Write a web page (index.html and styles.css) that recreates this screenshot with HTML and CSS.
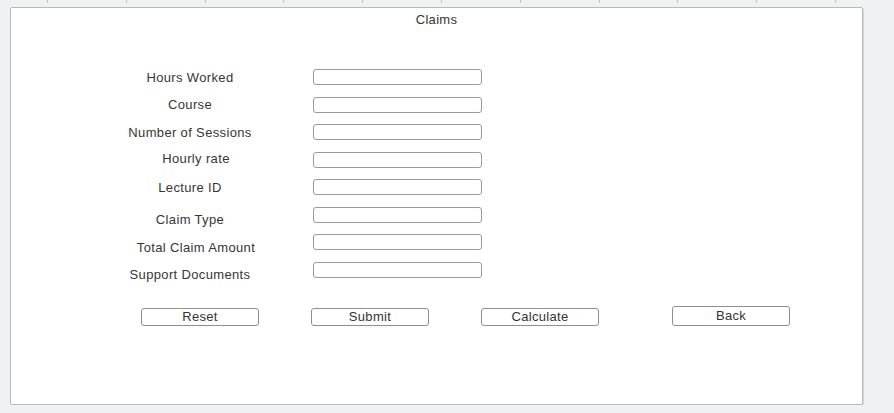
FILE: index.html
```html
<!DOCTYPE html>
<html lang="en">
<head>
<meta charset="utf-8">
<title>Claims</title>
<link rel="stylesheet" href="styles.css">
</head>
<body>
<div class="ruler"></div>
<main class="panel">
  <h1 class="title">Claims</h1>
  <form class="form">
    <label class="label">Hours Worked</label><input class="field" type="text">
    <label class="label">Course</label><input class="field" type="text">
    <label class="label">Number of Sessions</label><input class="field" type="text">
    <label class="label label-high label-right">Hourly rate</label><input class="field" type="text">
    <label class="label">Lecture ID</label><input class="field" type="text">
    <label class="label label-low">Claim Type</label><input class="field" type="text">
    <label class="label label-low label-right">Total Claim Amount</label><input class="field" type="text">
    <label class="label label-low">Support Documents</label><input class="field" type="text">
  </form>
  <div class="actions">
    <button class="btn" type="button">Reset</button>
    <button class="btn" type="button">Submit</button>
    <button class="btn" type="button">Calculate</button>
    <button class="btn btn-back" type="button">Back</button>
  </div>
</main>
</body>
</html>
```
FILE: styles.css
```css
html, body {
  margin: 0;
  padding: 0;
  background: #f0f1f3;
  font-family: "Liberation Sans", Arial, sans-serif;
  color: #383838;
}

.ruler {
  height: 3px;
  margin-bottom: 4px;
  background: repeating-linear-gradient(to right,
    transparent 0 47px,
    #bfc0c3 47px 48px,
    transparent 48px 78.8px);
}

.panel {
  box-sizing: border-box;
  margin-left: 10px;
  width: 853px;
  height: 398px;
  background: #ffffff;
  border: 1px solid #b9b9b9;
  border-radius: 2px;
  box-shadow: 1px 1px 0 #d6d6d6;
}

.title {
  margin: 4px 0 0;
  font-size: 13px;
  font-weight: normal;
  letter-spacing: 0.3px;
  line-height: 15px;
  text-align: center;
  color: #333;
}

.form {
  display: grid;
  grid-template-columns: 140px 169px;
  grid-auto-rows: 16px;
  column-gap: 53px;
  row-gap: 11.5px;
  margin: 42px 0 0 109px;
}

.label {
  align-self: center;
  text-align: center;
  font-size: 13px;
  letter-spacing: 0.35px;
  line-height: 15px;
  color: #363636;
  white-space: nowrap;
}

.label-low {
  padding-top: 10px;
}

.label-high {
  padding-bottom: 2px;
}

.label-right {
  padding-left: 12px;
}

.field {
  box-sizing: border-box;
  margin: 0;
  width: 169px;
  height: 16px;
  border: 1px solid #9a9a9a;
  border-radius: 3px;
  background: #fff;
  padding: 0 4px;
  font: 12px "Liberation Sans", Arial, sans-serif;
}

.actions {
  display: flex;
  align-items: center;
  gap: 52px;
  margin: 30px 0 0 130px;
}

.btn {
  box-sizing: border-box;
  width: 118px;
  height: 18px;
  margin: 0;
  padding: 0;
  border: 1px solid #8f8f8f;
  border-radius: 3px;
  background: #fff;
  font: 13px/16px "Liberation Sans", Arial, sans-serif;
  letter-spacing: 0.3px;
  color: #333;
}

.btn-back {
  margin-left: 21px;
  height: 20px;
  margin-top: -2px;
}
```
